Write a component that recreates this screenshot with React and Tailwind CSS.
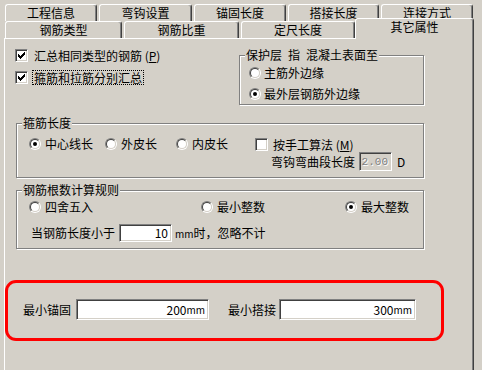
import React from "react";

function Check({ checked }) {
  const ys = [5, 6, 7, 6, 5, 4, 3];
  return (
    <span className="relative block w-[13px] h-[13px] shrink-0 bg-white border border-t-[#808080] border-l-[#808080] border-b-white border-r-white shadow-[inset_1px_1px_0_#404040,inset_-1px_-1px_0_#d4d0c8]">
      {checked && (
        <svg className="absolute -left-px -top-px" width="13" height="13" viewBox="0 0 13 13" shapeRendering="crispEdges">
          {ys.map((y, i) => (
            <rect key={i} x={3 + i} y={y} width="1" height="3" fill="#000" />
          ))}
        </svg>
      )}
    </span>
  );
}

function Radio({ checked }) {
  return (
    <span className="flex items-center justify-center w-[12px] h-[12px] shrink-0 rounded-full border border-t-[#808080] border-l-[#808080] border-b-white border-r-white">
      <span className="flex items-center justify-center w-[10px] h-[10px] rounded-full bg-white border border-t-[#404040] border-l-[#404040] border-b-[#d4d0c8] border-r-[#d4d0c8]">
        {checked && <span className="block w-[4px] h-[4px] rounded-full bg-black" />}
      </span>
    </span>
  );
}

function Group({ label, className, children }) {
  return (
    <div className={"relative border border-[#808080] shadow-[inset_1px_1px_0_#fff,1px_1px_0_#fff] " + className}>
      <span className="absolute left-[5px] -top-[7px] bg-[#d4d0c8] px-px leading-[12px] h-[12px] whitespace-pre">{label}</span>
      {children}
    </div>
  );
}

function Tab({ label, className }) {
  return (
    <div className={"flex items-center justify-center h-[17px] leading-[12px] border-t border-l border-r border-white border-r-[#404040] rounded-tl-[3px] rounded-tr-[3px] shadow-[inset_-1px_0_0_#808080] " + className}>
      {label}
    </div>
  );
}

function Opt({ checked, label, className }) {
  return (
    <div className={"flex items-center h-[12px] gap-[4px] leading-[12px] " + className}>
      <Radio checked={checked} />
      <span>{label}</span>
    </div>
  );
}

export default function App() {
  return (
    <div className="w-[482px] h-[370px] bg-[#d4d0c8] overflow-hidden text-[12px] text-black font-['Noto_Sans_CJK_SC',sans-serif]">
      {/* tab row 1 */}
      <div className="flex pt-[4px] pl-[5px] gap-[2px] h-[21px]">
        <Tab label="工程信息" className="w-[92px]" />
        <Tab label="弯钩设置" className="w-[93px]" />
        <Tab label="锚固长度" className="w-[92px]" />
        <Tab label="搭接长度" className="w-[91px]" />
        <Tab label="连接方式" className="w-[92px]" />
      </div>
      {/* tab row 2 */}
      <div className="flex items-end pl-[5px] h-[17px]">
        <Tab label="钢筋类型" className="w-[117px] mr-[2px]" />
        <Tab label="钢筋比重" className="w-[115px] mr-[2px]" />
        <Tab label="定尺长度" className="w-[114px]" />
        <div className="relative z-10 -mb-px w-[119px] h-[21px] flex justify-center pt-[2px] leading-[12px] bg-[#d4d0c8] border-t border-l border-r border-white border-r-[#404040] rounded-tl-[3px] rounded-tr-[3px] shadow-[inset_-1px_0_0_#808080]">
          其它属性
        </div>
      </div>
      {/* panel */}
      <div className="ml-[4px] w-[470px] h-[332px] border-t border-l border-r border-white border-r-[#404040] shadow-[inset_-1px_0_0_#808080]">
        {/* section 1 */}
        <div className="flex items-start mt-[10px]">
          <div className="ml-[10px] w-[224px] flex flex-col gap-[9px]">
            <div className="flex items-center h-[13px] gap-[6px] leading-[12px]">
              <Check checked />
              <span>汇总相同类型的钢筋 (<u>P</u>)</span>
            </div>
            <div className="flex items-center h-[13px] gap-[4px] leading-[12px]">
              <Check checked />
              <span className="flex items-center h-[15px] px-px border border-dotted border-black">箍筋和拉筋分别汇总</span>
            </div>
          </div>
          <Group label={"保护层\u2002指\u2002混凝土表面至"} className="mt-[6px] w-[185px] h-[50px] pt-[11px] pl-[9px]">
            <div className="flex flex-col gap-[9px]">
              <div className="flex items-center h-[12px] gap-[3px] leading-[12px]">
                <Radio />
                <span>主筋外边缘</span>
              </div>
              <div className="flex items-center h-[12px] gap-[3px] leading-[12px]">
                <Radio checked />
                <span>最外层钢筋外边缘</span>
              </div>
            </div>
          </Group>
        </div>
        {/* section 2 */}
        <Group label="箍筋长度" className="mt-[18px] ml-[11px] w-[408px] h-[55px] pt-[14px] flex">
          <div className="w-[238px] pl-[12px] flex">
            <Opt checked label="中心线长" className="w-[76px]" />
            <Opt label="外皮长" className="w-[71px]" />
            <Opt label="内皮长" className="w-[70px]" />
          </div>
          <div className="flex flex-col">
            <div className="flex items-center h-[13px] gap-[5px] leading-[12px]">
              <Check />
              <span>按手工算法 (<u>M</u>)</span>
            </div>
            <div className="flex items-center h-[19px] mt-[1px] pl-[16px] leading-[12px]">
              <span>弯钩弯曲段长度</span>
              <span className="ml-[4px] w-[33px] h-[19px] flex items-center justify-end pr-[3px] bg-[#d4d0c8] border border-t-[#808080] border-l-[#808080] border-b-white border-r-white shadow-[inset_1px_1px_0_#404040,inset_-1px_-1px_0_#d4d0c8] text-[#808080] [text-shadow:1px_1px_0_#fff] font-['Liberation_Mono',monospace] text-[11px]">2.00</span>
              <span className="ml-[5px]">D</span>
            </div>
          </div>
        </Group>
        {/* section 3 */}
        <Group label="钢筋根数计算规则" className="mt-[12px] ml-[11px] w-[408px] h-[59px] pt-[10px]">
          <div className="flex pl-[12px]">
            <Opt label="四舍五入" className="w-[172px]" />
            <Opt label="最小整数" className="w-[144px]" />
            <Opt checked label="最大整数" className="" />
          </div>
          <div className="flex items-center h-[18px] mt-[11px] pl-[14px] leading-[12px]">
            <span>当钢筋长度小于</span>
            <span className="ml-[4px] w-[53px] h-[18px] flex items-center justify-end pr-[3px] bg-white border border-t-[#808080] border-l-[#808080] border-b-white border-r-white shadow-[inset_1px_1px_0_#404040,inset_-1px_-1px_0_#d4d0c8]">10</span>
            <span className="ml-[3px]"><span className="text-[10px]">mm</span>时，忽略不计</span>
          </div>
        </Group>
        {/* red highlighted */}
        <div className="mt-[31px] w-[439px] h-[61px] border-[3px] border-[#ff0000] rounded-[11px] pt-[16px] pl-[15px]">
          <div className="flex items-center h-[21px] leading-[12px]">
            <span>最小锚固</span>
            <span className="ml-[5px] w-[133px] h-[21px] flex items-center justify-end pr-[3px] bg-white border border-t-[#808080] border-l-[#808080] border-b-white border-r-white shadow-[inset_1px_1px_0_#404040,inset_-1px_-1px_0_#d4d0c8]">200<span className="text-[10px]">mm</span></span>
            <span className="ml-[19px]">最小搭接</span>
            <span className="ml-[3px] w-[137px] h-[21px] flex items-center justify-end pr-[3px] bg-white border border-t-[#808080] border-l-[#808080] border-b-white border-r-white shadow-[inset_1px_1px_0_#404040,inset_-1px_-1px_0_#d4d0c8]">300<span className="text-[10px]">mm</span></span>
          </div>
        </div>
      </div>
    </div>
  );
}
